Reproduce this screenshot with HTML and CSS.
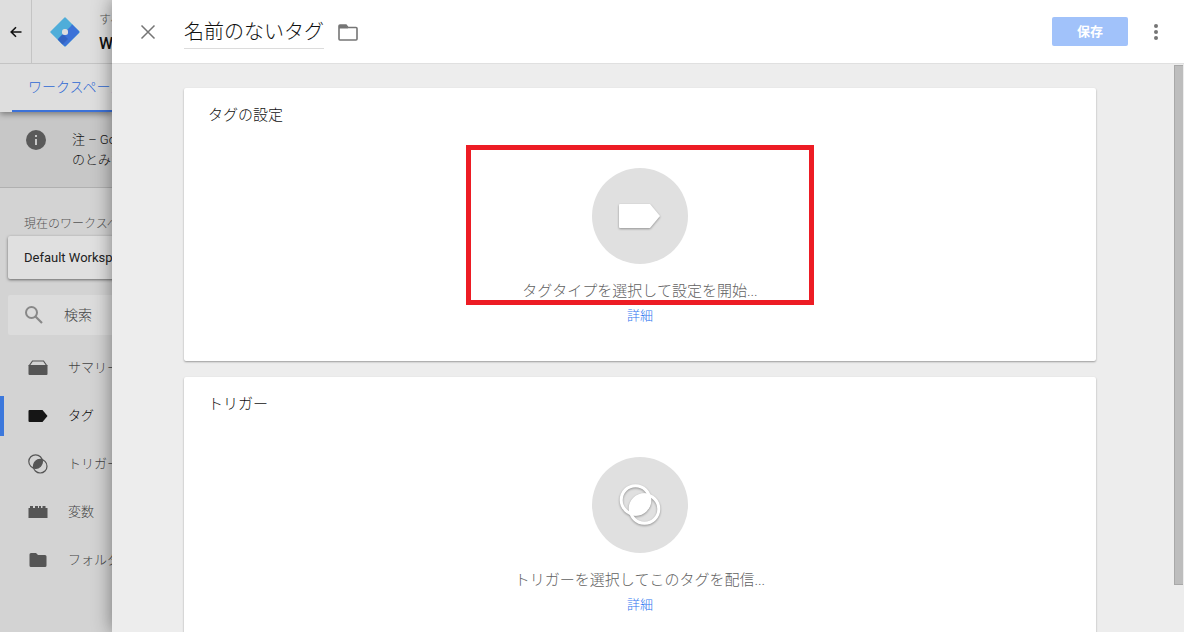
FILE: index.html
```
<!DOCTYPE html>
<html lang="ja">
<head>
	<meta charset="UTF-8">
	<title>名前のないタグ</title>
	<link rel="stylesheet" href="styles.css">
</head>
<body>
	<div class="page">
		<div class="side">
			<header class="side-head">
				<button class="back" aria-label="戻る">
					<svg width="12" height="12" viewBox="0 0 12 12"><path d="M11.500 6H1.500M6 1.200L1.200 6L6 10.800" fill="none" stroke="#111" stroke-width="1.600"/></svg>
				</button>
				<svg class="logo" width="30" height="30" viewBox="0 0 30 30">
					<path d="M15 1L29 15L15 29L1 15Z" fill="#4fadd9" stroke="#4fadd9" stroke-width="1.500" stroke-linejoin="round"/>
					<path d="M21 9L22 7.200L28.800 14Q29.700 15 28.800 16L16 28.800Q15 29.700 14 28.800L8.800 23.600L7.800 22.200Z" fill="#3c72d8"/>
					<path d="M9.500 20.500L13 17L18 22L12.500 27.400L7.800 22.600Z" fill="#3263c2"/>
					<rect x="12" y="12" width="6" height="6" rx="2.500" fill="#dedede"/>
				</svg>
				<div class="account">
					<span>すべてのアカウント</span>
					<b>Web</b>
				</div>
			</header>
			<nav class="tabs"><a href="#">ワークスペース</a></nav>
			<div class="note">
				<svg width="20" height="20" viewBox="0 0 20 20"><circle cx="10" cy="10" r="10" fill="#5a5a5a"/><path d="M9 5h2v2H9zM9 9h2v6H9z" fill="#c7c7c7"/></svg>
				<p>注 – Google<br>のとみなされ</p>
			</div>
			<p class="label">現在のワークスペース</p>
			<button class="workspace">Default Workspace</button>
			<label class="search">
				<svg width="18" height="18" viewBox="0 0 18 18"><circle cx="6.500" cy="6.500" r="5.500" fill="none" stroke="#888" stroke-width="2"/><path d="M10.500 10.500L17 17" stroke="#888" stroke-width="2.200"/></svg>
				<input type="text" placeholder="検索" aria-label="検索">
			</label>
			<ul class="menu">
				<li><a href="#">
					<svg width="20" height="20" viewBox="0 0 20 20"><path d="M1 8L4.500 3H15.500L19 8" fill="none" stroke="#555" stroke-width="1.200"/><path d="M0.500 7h19v9q0 1-1 1h-17q-1 0-1-1z" fill="#555"/></svg>
					サマリー</a></li>
				<li class="active"><a href="#">
					<svg width="20" height="20" viewBox="0 0 20 20"><path d="M1.500 4H14.500L19.500 10L14.500 16H1.500Q0.500 16 0.500 15V5Q0.500 4 1.500 4Z" fill="#151515"/></svg>
					タグ</a></li>
				<li><a href="#">
					<svg width="20" height="20" viewBox="0 0 20 20"><g fill="none" stroke="#555" stroke-width="1.200"><circle cx="7.600" cy="7.600" r="6.800"/><circle cx="12.200" cy="12.200" r="6.800"/></g><path d="M14.100 5.700A6.800 6.800 0 0 1 5.700 14.100A6.800 6.800 0 0 1 14.100 5.700Z" fill="#555"/></svg>
					トリガー</a></li>
				<li><a href="#">
					<svg width="20" height="20" viewBox="0 0 20 20"><path d="M0.500 6H2V4H5V6H7V4H10V6H11V4H13V6H14.500V4H17.500V6H19.500V16H0.500Z" fill="#555"/></svg>
					変数</a></li>
				<li><a href="#">
					<svg width="20" height="20" viewBox="0 0 20 20"><path d="M3 3H8L10 5H17Q18.500 5 18.500 6.500V15.500Q18.500 17 17 17H3Q1.500 17 1.500 15.500V4.500Q1.500 3 3 3Z" fill="#555"/></svg>
					フォルダ</a></li>
			</ul>
		</div>
		<main class="sheet">
			<header class="sheet-head">
				<button class="close" aria-label="閉じる">
					<svg width="16" height="16" viewBox="0 0 16 16"><path d="M1.500 1.500L14.500 14.500M14.500 1.500L1.500 14.500" stroke="#757575" stroke-width="1.500"/></svg>
				</button>
				<input class="name" type="text" value="名前のないタグ" aria-label="タグ名">
				<button class="folder" aria-label="フォルダ">
					<svg width="20" height="18" viewBox="0 0 20 18"><path d="M2 2H8L10 4.500H18Q19 4.500 19 5.500V16Q19 17 18 17H2Q1 17 1 16V3Q1 2 2 2Z" fill="none" stroke="#757575" stroke-width="1.600"/><path d="M1 2H8L10 5.500H1Z" fill="#757575"/></svg>
				</button>
				<button class="save">保存</button>
				<button class="more" aria-label="その他">
					<svg width="4" height="16" viewBox="0 0 4 16"><g fill="#757575"><circle cx="2" cy="2" r="2"/><circle cx="2" cy="8" r="2"/><circle cx="2" cy="14" r="2"/></g></svg>
				</button>
			</header>
			<div class="content">
				<section class="card">
					<h2>タグの設定</h2>
					<div class="pick">
						<button class="circle" aria-label="タグタイプを選択">
							<svg width="96" height="96" viewBox="0 0 96 96"><path d="M28 36H58L68 48L58 60H28Q27 60 27 59V37Q27 36 28 36Z" fill="#fff"/></svg>
						</button>
						<p>タグタイプを選択して設定を開始...</p>
						<a href="#">詳細</a>
						<span class="mark"></span>
					</div>
				</section>
				<section class="card">
					<h2>トリガー</h2>
					<div class="pick">
						<button class="circle" aria-label="トリガーを選択">
							<svg width="96" height="96" viewBox="0 0 96 96"><g fill="none" stroke="#fff" stroke-width="3"><circle cx="43.500" cy="43" r="14.300"/><circle cx="52.500" cy="52" r="14.300"/></g><path d="M57.050 38.450A14.300 14.300 0 0 1 38.950 56.550A14.300 14.300 0 0 1 57.050 38.450Z" fill="#fff" stroke="#fff" stroke-width="2"/></svg>
						</button>
						<p>トリガーを選択してこのタグを配信...</p>
						<a href="#">詳細</a>
					</div>
				</section>
				<div class="scroll"></div>
			</div>
		</main>
	</div>
</body>
</html>
```

FILE: styles.css
```
* { margin: 0; padding: 0; box-sizing: border-box; }
body { font: 300 13px/20px Roboto, "Noto Sans CJK JP", sans-serif; color: #111; }
button, input { font: inherit; color: inherit; border: 0; background: none; outline: 0; }
button { cursor: pointer; }
a { color: #2f76f0; text-decoration: none; }
li { list-style: none; }
svg { display: block; flex: none; }
.page { display: flex; height: 100vh; overflow: hidden; }

/* dimmed page behind the sheet */
.side { width: 112px; flex: none; overflow: hidden; white-space: nowrap; background: #d3d3d3; }
.side-head { position: relative; z-index: 1; display: flex; align-items: center; height: 64px; background: #dedede; border-bottom: 1px solid #c4c4c4; }
.back { display: flex; align-items: center; justify-content: center; flex: none; width: 32px; height: 63px; border-right: 1px solid #c4c4c4; }
.logo { margin: 0 19px 0 18px; }
.account span { display: block; font-size: 12px; line-height: 24px; color: #555; }
.account b { display: block; font-size: 16px; line-height: 24px; font-weight: 500; }
.tabs { position: relative; height: 48px; padding-left: 12px; background: #dedede; box-shadow: 0 2px 6px rgba(0,0,0,.4); }
.tabs a { display: block; padding-left: 16px; height: 48px; line-height: 46px; font-size: 14px; color: #2f68d4; border-bottom: 2px solid #3c72d8; }
.note { display: flex; gap: 26px; height: 76px; padding: 18px 0 0 26px; background: #c7c7c7; border-bottom: 1px solid #b0b0b0; }
.label { padding: 26px 0 2px 24px; font-size: 12px; color: #555; }
.workspace { display: block; width: 240px; height: 43px; margin-left: 8px; padding-left: 16px; text-align: left; font-weight: 400; color: #222; background: #e0e0e0; border-radius: 2px; box-shadow: 0 1px 3px rgba(0,0,0,.5); }
.search { display: flex; align-items: center; gap: 21px; width: 240px; height: 40px; margin: 16px 0 0 8px; padding-left: 17px; background: #dcdcdc; border-radius: 2px; }
.search input { width: 120px; font-size: 14px; }
.search input::placeholder { color: #444; }
.menu { padding-top: 9px; }
.menu a { display: flex; align-items: center; gap: 20px; height: 48px; padding-left: 28px; color: #444; }
.menu .active { background: linear-gradient(#3c78dc, #3c78dc) no-repeat 0 4px / 4px 40px; }
.menu .active a { color: #000; }

/* sheet */
.sheet { position: relative; z-index: 2; display: flex; flex-direction: column; flex: 1; min-width: 0; background: #ededed; box-shadow: 0 0 18px rgba(0,0,0,.45); }
.sheet-head { display: flex; align-items: center; flex: none; height: 64px; padding: 0 16px 0 28px; background: #fff; border-bottom: 1px solid #e0e0e0; }
.close { width: 16px; height: 16px; margin-right: 28px; }
.name { width: 140px; height: 34px; padding-bottom: 2px; font-size: 20px; border-bottom: 1px solid #dcdcdc; }
.folder { margin-left: 14px; }
.save { width: 76px; height: 29px; margin-left: auto; background: #a1c2fa; border-radius: 2px; color: #fff; font-weight: 700; }
.more { display: flex; justify-content: center; width: 24px; margin-left: 16px; }
.content { position: relative; flex: 1; min-height: 0; padding: 24px 88px 0 72px; overflow: hidden; }
.card { min-height: 273px; margin-bottom: 16px; padding: 17px 24px; background: #fff; border-radius: 2px; box-shadow: 0 1px 2px rgba(0,0,0,.35); }
.card h2 { font-size: 15px; line-height: 20px; font-weight: 300; }
.pick { position: relative; display: flex; flex-direction: column; align-items: center; padding-top: 43px; }
.circle { width: 96px; height: 96px; border-radius: 50%; background: #e0e0e0; }
.circle svg { filter: drop-shadow(0 1px 1px rgba(0,0,0,.35)); }
.pick p { margin-top: 15px; font-size: 15px; line-height: 24px; color: #616161; }
.pick a { margin-top: 3px; }
.mark { position: absolute; top: 20px; left: 50%; width: 348px; height: 160px; transform: translateX(-50%); border: 5px solid #ed1c24; pointer-events: none; }
.scroll { position: absolute; top: 1px; right: 1px; width: 9px; height: 520px; background: #bdbdbd; border: 1px solid #a8a8a8; border-right: 0; }
```
